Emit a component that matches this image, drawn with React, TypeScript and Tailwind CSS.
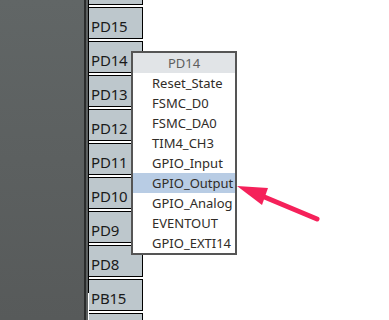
import React from "react";

const pins = ["", "PD15", "PD14", "PD13", "PD12", "PD11", "PD10", "PD9", "PD8", "PB15", ""];
const items = [
  "Reset_State",
  "FSMC_D0",
  "FSMC_DA0",
  "TIM4_CH3",
  "GPIO_Input",
  "GPIO_Output",
  "GPIO_Analog",
  "EVENTOUT",
  "GPIO_EXTI14",
];

export default function App() {
  return (
    <div
      className="relative w-[389px] h-[320px] overflow-hidden bg-white flex"
      style={{ fontFamily: '"Noto Sans", "Open Sans", sans-serif' }}
    >
      <div className="w-[84px] h-full bg-gradient-to-b from-[#616666] to-[#575a5a]" />
      <div className="w-[2px] h-full bg-[#2a2c2c]" />
      <div className="w-[2px] h-full bg-[#5c6060]" />
      <div className="w-[55px] h-full border-l border-black bg-white flex flex-col gap-[2px] -mt-[27px]">
        {pins.map((p, i) => (
          <div
            key={i}
            className="h-[32px] shrink-0 border-y border-r border-black bg-[#bdc7cc] pl-[2px] pt-[11px] text-[15px] leading-[15px] text-[#1a1a1a] tracking-[-0.2px]"
          >
            {p}
          </div>
        ))}
      </div>

      <div className="absolute left-[131px] top-[51px] w-[106px] border-2 border-[#555555] bg-white">
        <div className="h-[20px] bg-[#e1e4e7] text-center text-[13px] leading-[20px] text-[#5e5e5e]">
          PD14
        </div>
        {items.map((it) => (
          <div
            key={it}
            className={`h-[20px] pl-[19px] text-[13px] leading-[20px] text-[#302c28] whitespace-nowrap ${
              it === "GPIO_Output" ? "bg-[#b8cce4]" : ""
            }`}
          >
            {it}
          </div>
        ))}
      </div>

      <svg
        className="absolute left-0 top-0 pointer-events-none"
        width="389"
        height="320"
        viewBox="0 0 389 320"
      >
        <line x1="262" y1="196" x2="317" y2="219" stroke="#f5215a" strokeWidth="5" strokeLinecap="round" />
        <polygon points="237,186 268,188 262,205" fill="#f5215a" />
      </svg>
    </div>
  );
}
